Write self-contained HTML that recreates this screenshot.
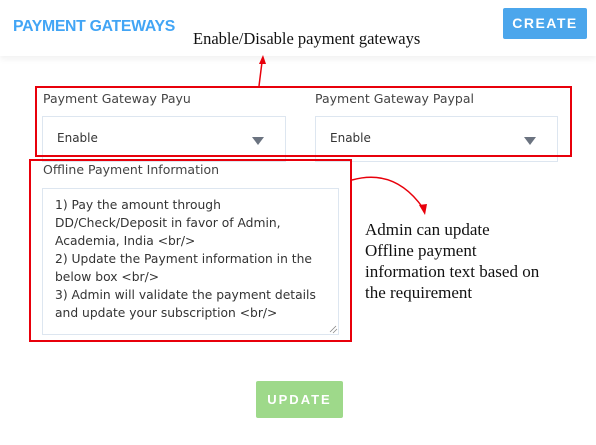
<!DOCTYPE html>
<html><head><style>
body{margin:0;width:596px;height:445px;background:#fff;position:relative;overflow:hidden;font-family:"DejaVu Sans","Liberation Sans",sans-serif;color:#333}
.a{position:absolute}
.hdr{left:0;top:0;width:596px;height:56px;background:#fff;box-shadow:0 3px 6px rgba(0,0,0,0.06)}
.title{left:13px;top:18px;font-size:15.8px;font-weight:bold;color:#42a5f5;letter-spacing:-0.3px;font-family:"Liberation Sans",sans-serif}
.create{left:503px;top:8px;width:84px;height:31px;background:#4ba6ec;color:#fff;font-weight:bold;font-size:14px;letter-spacing:1.5px;text-align:center;line-height:31px;border-radius:2px;font-family:"Liberation Sans",sans-serif}
.serif{font-family:"Liberation Serif",serif;color:#111}
.lbl{font-size:12.5px;color:#444}
.sel{border:1px solid #dde6f0;height:44px;background:#fff}
.sel span{position:absolute;left:14px;top:14px;font-size:12px;color:#333}
.tri{position:absolute;width:0;height:0;border-left:6px solid transparent;border-right:6px solid transparent;border-top:8px solid #6b7380}
.rb{border:2px solid #e8000b;box-sizing:border-box}
.ta{border:1px solid #dde6f0;font-size:12.3px;line-height:18px;color:#333;padding:7px 12px;box-sizing:border-box}
.upd{left:256px;top:381px;width:87px;height:37px;background:#9ed98a;color:#fff;font-weight:bold;font-size:13px;letter-spacing:2px;text-align:center;line-height:37px;border-radius:2px;font-family:"Liberation Sans",sans-serif}
</style></head><body>
<div class="a hdr"></div>
<div class="a title">PAYMENT GATEWAYS</div>
<div class="a create">CREATE</div>
<div class="a serif" style="left:193px;top:29px;font-size:16.5px">Enable/Disable payment gateways</div>
<svg class="a" style="left:0;top:0" width="596" height="445">
<line x1="259" y1="86" x2="262" y2="62" stroke="#e8000b" stroke-width="1.5"/>
<polygon points="263,55 259,64 266,64" fill="#e8000b"/>
<path d="M352,180 Q395,168 423,208" stroke="#e8000b" stroke-width="1.5" fill="none"/>
<polygon points="425,215 419,205 427,204" fill="#e8000b"/>
<path d="M330,332 L336,326 M333,333 L337,329" stroke="#888" stroke-width="0.8"/>
</svg>
<div class="a lbl" style="left:43px;top:91px">Payment Gateway Payu</div>
<div class="a lbl" style="left:315px;top:91px">Payment Gateway Paypal</div>
<div class="a sel" style="left:42px;top:116px;width:242px"><span>Enable</span><div class="tri" style="left:209px;top:20px"></div></div>
<div class="a sel" style="left:315px;top:116px;width:241px"><span>Enable</span><div class="tri" style="left:208px;top:20px"></div></div>
<div class="a rb" style="left:35px;top:86px;width:537px;height:71px"></div>
<div class="a lbl" style="left:43px;top:162px">Offline Payment Information</div>
<div class="a ta" style="left:42px;top:188px;width:297px;height:147px">1) Pay the amount through DD/Check/Deposit in favor of Admin, Academia, India &lt;br/&gt;<br>2) Update the Payment information in the below box &lt;br/&gt;<br>3) Admin will validate the payment details and update your subscription &lt;br/&gt;</div>
<div class="a rb" style="left:29px;top:159px;width:323px;height:183px"></div>
<div class="a serif" style="left:365px;top:219px;font-size:17px;line-height:21px;white-space:nowrap">Admin can update<br>Offline payment<br>information text based on<br>the requirement</div>
<div class="a upd">UPDATE</div>
</body></html>
